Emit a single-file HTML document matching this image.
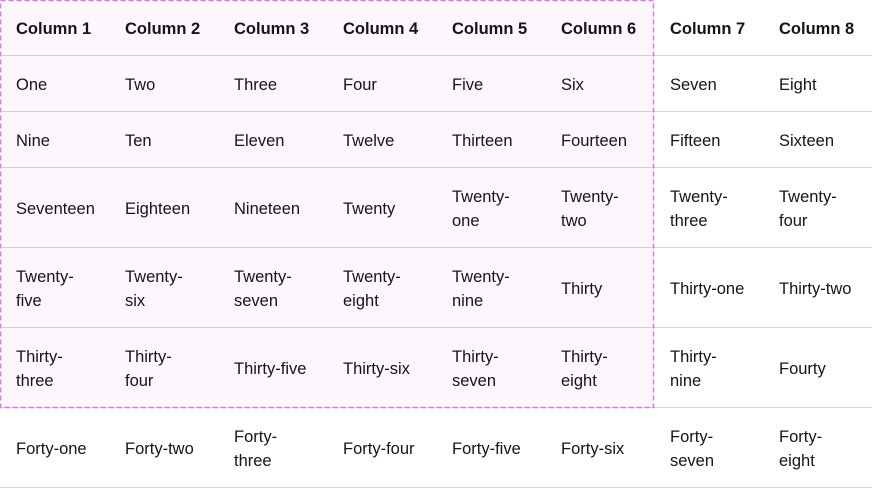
<!DOCTYPE html>
<html><head><meta charset="utf-8"><style>
html,body{margin:0;padding:0;background:#fff;}
body{width:872px;height:488px;position:relative;overflow:hidden;font-family:"Liberation Sans",sans-serif;color:#151515;font-size:16.5px;}
.hl{position:absolute;left:0;top:0;width:654px;height:408px;background:#fdf6fc;}
.r{position:absolute;left:0;width:872px;display:flex;box-sizing:border-box;border-bottom:1px solid #d2d2d2;}
.c{width:109px;flex:none;box-sizing:border-box;padding:2px 0 0 16px;display:flex;align-items:center;line-height:24px;white-space:nowrap;}
.h .c{font-weight:bold;}
svg{position:absolute;left:0;top:0;z-index:2;}
</style></head><body>
<div class="hl"></div>
<div class="r h" style="top:0;height:56px"><div class="c">Column 1</div><div class="c">Column 2</div><div class="c">Column 3</div><div class="c">Column 4</div><div class="c">Column 5</div><div class="c">Column 6</div><div class="c">Column 7</div><div class="c">Column 8</div></div>
<div class="r" style="top:56px;height:56px"><div class="c">One</div><div class="c">Two</div><div class="c">Three</div><div class="c">Four</div><div class="c">Five</div><div class="c">Six</div><div class="c">Seven</div><div class="c">Eight</div></div>
<div class="r" style="top:112px;height:56px"><div class="c">Nine</div><div class="c">Ten</div><div class="c">Eleven</div><div class="c">Twelve</div><div class="c">Thirteen</div><div class="c">Fourteen</div><div class="c">Fifteen</div><div class="c">Sixteen</div></div>
<div class="r" style="top:168px;height:80px"><div class="c">Seventeen</div><div class="c">Eighteen</div><div class="c">Nineteen</div><div class="c">Twenty</div><div class="c">Twenty-<br>one</div><div class="c">Twenty-<br>two</div><div class="c">Twenty-<br>three</div><div class="c">Twenty-<br>four</div></div>
<div class="r" style="top:248px;height:80px"><div class="c">Twenty-<br>five</div><div class="c">Twenty-<br>six</div><div class="c">Twenty-<br>seven</div><div class="c">Twenty-<br>eight</div><div class="c">Twenty-<br>nine</div><div class="c">Thirty</div><div class="c">Thirty-one</div><div class="c">Thirty-two</div></div>
<div class="r" style="top:328px;height:80px"><div class="c">Thirty-<br>three</div><div class="c">Thirty-<br>four</div><div class="c">Thirty-five</div><div class="c">Thirty-six</div><div class="c">Thirty-<br>seven</div><div class="c">Thirty-<br>eight</div><div class="c">Thirty-<br>nine</div><div class="c">Fourty</div></div>
<div class="r" style="top:408px;height:80px"><div class="c">Forty-one</div><div class="c">Forty-two</div><div class="c">Forty-<br>three</div><div class="c">Forty-four</div><div class="c">Forty-five</div><div class="c">Forty-six</div><div class="c">Forty-<br>seven</div><div class="c">Forty-<br>eight</div></div>
<svg width="872" height="488"><rect x="0.5" y="0.5" width="653" height="407" fill="none" stroke="#d47ddc" stroke-width="1.5" stroke-dasharray="5 3"/></svg>
</body></html>
